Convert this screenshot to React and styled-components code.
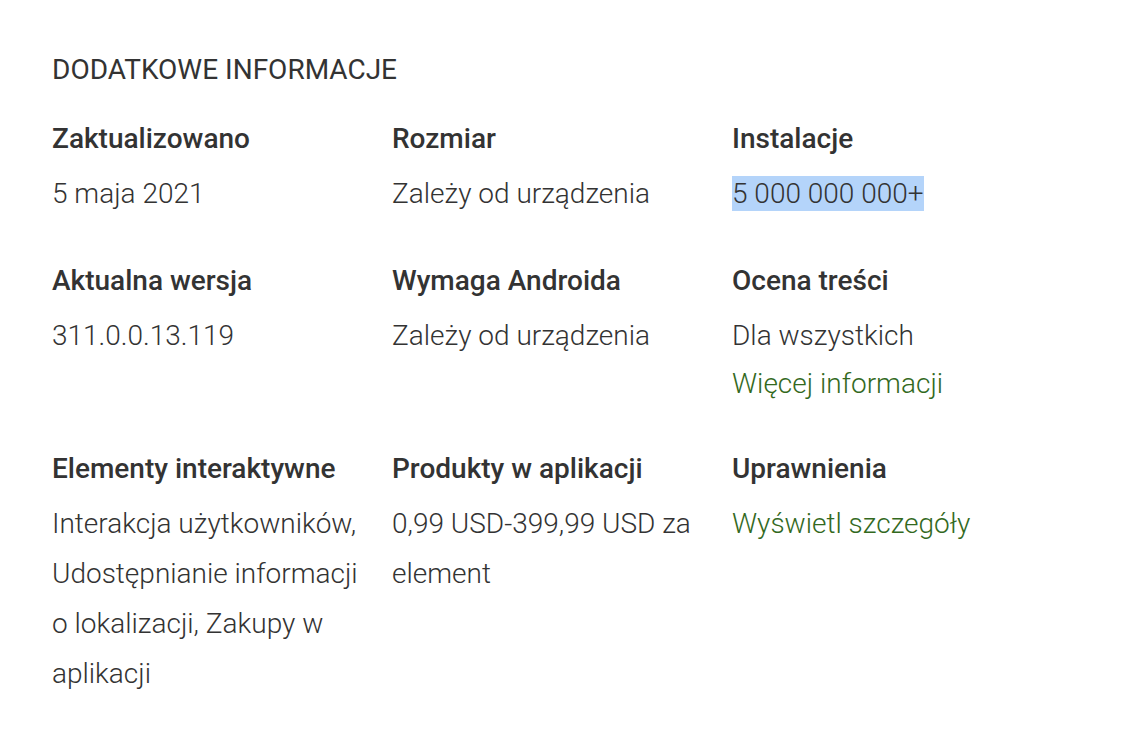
import styled, { createGlobalStyle } from "styled-components";

const GlobalStyle = createGlobalStyle`
  body {
    margin: 0;
    background: #ffffff;
    font-family: Roboto, "Noto Sans", sans-serif;
    color: #333333;
  }
`;

const items = [
  { label: "Zaktualizowano", value: ["5 maja 2021"] },
  { label: "Rozmiar", value: ["Zależy od urządzenia"] },
  { label: "Instalacje", value: ["5 000 000 000+"], selected: true },
  { label: "Aktualna wersja", value: ["311.0.0.13.119"] },
  { label: "Wymaga Androida", value: ["Zależy od urządzenia"] },
  { label: "Ocena treści", value: ["Dla wszystkich"], link: "Więcej informacji" },
  {
    label: "Elementy interaktywne",
    value: ["Interakcja użytkowników, Udostępnianie informacji o lokalizacji, Zakupy w aplikacji"],
  },
  { label: "Produkty w aplikacji", value: ["0,99 USD-399,99 USD za element"] },
  { label: "Uprawnienia", value: [], link: "Wyświetl szczegóły" },
];

const App = () => {
  return (
    <>
      <GlobalStyle />
      <Section>
        <Title>DODATKOWE INFORMACJE</Title>
        <Grid>
          {items.map((item) => (
            <Cell key={item.label}>
              <Label>{item.label}</Label>
              {item.value.map((v) => (
                <Value key={v}>{item.selected ? <Selected>{v}</Selected> : v}</Value>
              ))}
              {item.link && <Link $afterValue={item.value.length > 0}>{item.link}</Link>}
            </Cell>
          ))}
        </Grid>
      </Section>
    </>
  );
};

export default App;

const Section = styled.div`
  padding: 50px 0 0 52px;
`;

const Title = styled.div`
  font-size: 28px;
  line-height: 40px;
  font-weight: 400;
  color: #333333;
  margin-bottom: 29px;
`;

const Grid = styled.div`
  display: grid;
  grid-template-columns: repeat(3, 318px);
  column-gap: 22px;
  row-gap: 42px;
`;

const Cell = styled.div`
  display: flex;
  flex-direction: column;
`;

const Label = styled.div`
  font-size: 28px;
  line-height: 40px;
  font-weight: 500;
  color: #333333;
  margin-bottom: 10px;
`;

const Value = styled.div`
  font-size: 28px;
  line-height: 50px;
  font-weight: 300;
  color: #333333;
`;

const Selected = styled.span`
  background: #b4d4fa;
  padding: 1px 0;
`;

const Link = styled.div`
  font-size: 28px;
  line-height: ${(p) => (p.$afterValue ? "46px" : "50px")};
  font-weight: 300;
  color: #33691e;
`;
